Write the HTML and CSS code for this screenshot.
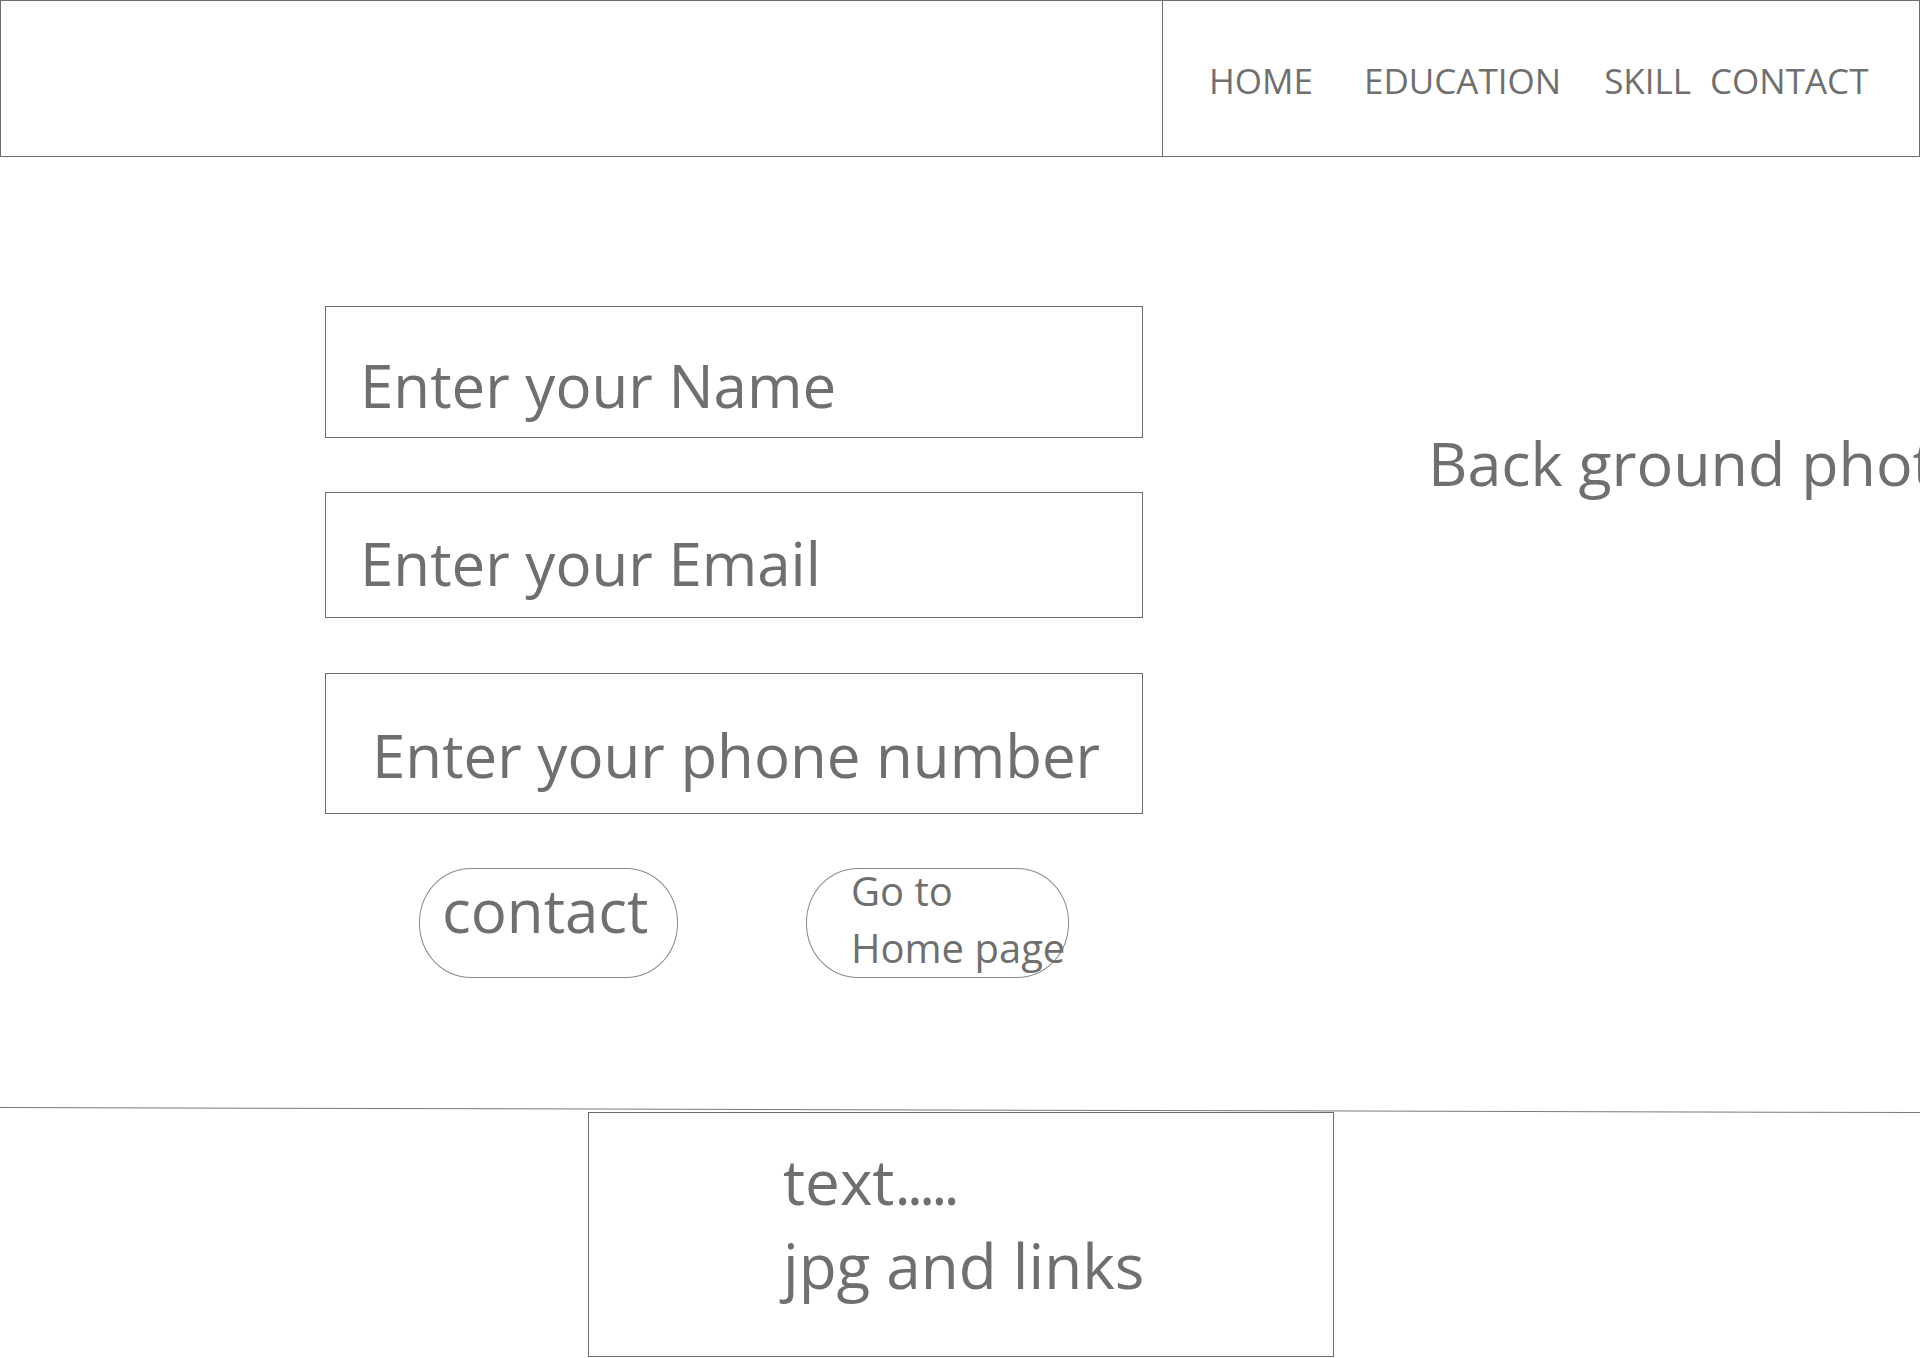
FILE: index.html
```html
<!DOCTYPE html>
<html lang="en">
<head>
<meta charset="utf-8">
<title>Contact</title>
<link rel="stylesheet" href="styles.css">
</head>
<body>
<header class="topbar">
  <div class="brand"></div>
  <nav class="nav">
    <span class="nav-item nav-home">HOME</span>
    <span class="nav-item nav-edu">EDUCATION</span>
    <span class="nav-item nav-skill">SKILL</span>
    <span class="nav-item nav-contact">CONTACT</span>
  </nav>
</header>

<main class="main">
  <form class="form">
    <div class="field field-name">Enter your Name</div>
    <div class="field field-email">Enter your Email</div>
    <div class="field field-phone">Enter your phone number</div>
    <div class="actions">
      <div class="btn btn-contact">contact</div>
      <div class="btn btn-home"><span class="btn-home-text">Go to<br>Home page</span></div>
    </div>
  </form>
  <div class="bg-photo">Back ground photo</div>
</main>

<div class="rule"></div>

<footer class="footer">
  <div class="footer-box">
    <div class="footer-line">text<span class="dots">.....</span></div>
    <div class="footer-line">jpg and links</div>
  </div>
</footer>
</body>
</html>
```

FILE: styles.css
```css
html, body {
  margin: 0;
  padding: 0;
  background: #ffffff;
}
body {
  width: 1920px;
  height: 1358px;
  overflow: hidden;
  font-family: "Open Sans", "Noto Sans", sans-serif;
  color: #6f6f6f;
}

/* Header */
.topbar {
  box-sizing: border-box;
  height: 157px;
  display: flex;
  border: 1px solid #6d6d6d;
}
.brand {
  width: 1161px;
  border-right: 1px solid #6d6d6d;
}
.nav {
  flex: 1;
  display: flex;
  align-items: center;
  padding-left: 46px;
  padding-top: 3px;
  font-size: 35px;
  white-space: nowrap;
}
.nav-edu { margin-left: 51px; }
.nav-skill { margin-left: 43px; }
.nav-contact { margin-left: 19px; }

/* Main */
.main {
  display: flex;
  align-items: flex-start;
  padding-top: 149px;
  padding-left: 325px;
  height: 800px;
  box-sizing: border-box;
}
.form {
  flex: none;
  width: 818px;
  display: flex;
  flex-direction: column;
  margin: 0;
}
.field {
  box-sizing: border-box;
  border: 1px solid #6d6d6d;
  font-size: 60px;
  white-space: nowrap;
}
.field-name {
  height: 132px;
  padding: 37px 0 0 34px;
}
.field-email {
  height: 126px;
  margin-top: 54px;
  padding: 29px 0 0 34px;
}
.field-phone {
  height: 141px;
  margin-top: 55px;
  padding: 40px 0 0 46px;
}
.actions {
  display: flex;
  margin-top: 54px;
  padding-left: 94px;
  gap: 128px;
}
.btn {
  box-sizing: border-box;
  height: 110px;
  border: 1px solid #8a8a8a;
  border-radius: 52px / 54px;
  white-space: nowrap;
}
.btn-contact {
  width: 259px;
  font-size: 60px;
  padding-left: 22px;
}
.btn-home {
  width: 263px;
  font-size: 40px;
  line-height: 57px;
  padding-left: 44px;
}
.btn-home-text {
  display: block;
  margin-top: -7px;
}
.bg-photo {
  flex: none;
  margin-left: 285px;
  margin-top: 115px;
  font-size: 61px;
  white-space: nowrap;
}

/* Footer */
.rule {
  width: 1920px;
  height: 0;
  border-top: 1.5px solid #7a7a7a;
  margin-top: 150px;
  transform: rotate(0.15deg);
  transform-origin: left center;
}
.footer {
  padding-left: 588px;
  padding-top: 4px;
}
.footer-box {
  box-sizing: border-box;
  width: 746px;
  height: 245px;
  border: 1px solid #6d6d6d;
  padding: 26px 0 0 194px;
  font-size: 62px;
  line-height: 84px;
}
.dots {
  letter-spacing: -4px;
}
```
